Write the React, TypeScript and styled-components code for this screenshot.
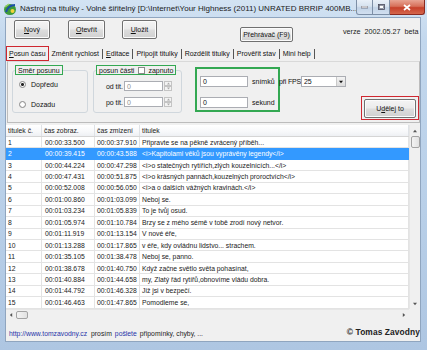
import React from 'react';
import styled, { createGlobalStyle } from 'styled-components';

const Global = createGlobalStyle`
  html, body { margin: 0; padding: 0; width: 427px; height: 350px; overflow: hidden; background: #fff; }
  * { box-sizing: border-box; }
  body { font-family: "Liberation Sans", Arial, sans-serif; color: #000; }
`;

const Window = styled.div`
  width: 427px;
  height: 350px;
  display: flex;
  flex-direction: column;
  background: linear-gradient(180deg, #d3e3f3 0%, #c2d7ed 12%, #b8cfe8 60%, #aec6e2 100%);
  padding-bottom: 8px;
`;

const TitleBar = styled.div`
  height: 17px;
  flex-shrink: 0;
  display: flex;
  align-items: flex-start;
  padding-left: 3px;
`;

const AppIcon = styled.svg`
  width: 14px;
  height: 14px;
  margin-top: 2px;
  flex-shrink: 0;
`;

const TitleText = styled.div`
  flex: 1;
  margin-left: 3px;
  margin-top: 4px;
  font-size: 8px;
  color: #1b1b1b;
  white-space: nowrap;
  overflow: hidden;
`;

const CaptionButtons = styled.div`
  display: flex;
  margin-right: 2px;
  flex-shrink: 0;
`;

const CaptionBtn = styled.div<{ $w: number; $close?: boolean; $first?: boolean; $last?: boolean }>`
  width: ${p => p.$w}px;
  height: 15px;
  display: flex;
  align-items: center;
  justify-content: center;
  border: 1px solid ${p => (p.$close ? '#8a2a20' : '#7d8fa6')};
  border-top: none;
  border-left-width: ${p => (p.$first ? 1 : 0)}px;
  border-radius: ${p => (p.$first ? '0 0 0 3px' : p.$last ? '0 0 3px 0' : '0')};
  background: ${p =>
    p.$close
      ? 'linear-gradient(180deg, #e8a493 0%, #d7705a 45%, #c7402a 55%, #d4664c 100%)'
      : 'linear-gradient(180deg, #e9f0f8 0%, #d6e2ef 45%, #c2d3e6 55%, #d1dff0 100%)'};
`;

const Client = styled.div`
  flex: 1;
  margin: 0 6px 0 5px;
  background: #f0f0f0;
  border: 1px solid #8fa5bf;
  display: flex;
  flex-direction: column;
  min-height: 0;
`;

const Toolbar = styled.div`
  height: 28px;
  flex-shrink: 0;
  display: flex;
  align-items: flex-start;
  padding: 1px 0 0 8px;
`;

const Button = styled.div<{ $w: number; $h?: number; $ml?: number; $mt?: number }>`
  width: ${p => p.$w}px;
  height: ${p => p.$h ?? 19}px;
  margin-left: ${p => p.$ml ?? 0}px;
  margin-top: ${p => p.$mt ?? 0}px;
  display: flex;
  align-items: center;
  justify-content: center;
  font-size: 7px;
  color: #111;
  border: 1px solid #707070;
  border-radius: 2px;
  background: linear-gradient(180deg, #f4f4f4 0%, #ebebeb 48%, #dddddd 52%, #d0d0d0 100%);
  box-shadow: inset 0 0 0 1px #fbfbfb;
  white-space: nowrap;
`;

const Version = styled.div`
  margin-left: 50px;
  margin-top: 8px;
  font-size: 7.2px;
  color: #222;
  white-space: nowrap;
  word-spacing: 2px;
`;

const TabRow = styled.div`
  height: 15px;
  flex-shrink: 0;
  display: flex;
  align-items: stretch;
  font-size: 7px;
  color: #111;
`;

const Tab = styled.div<{ $active?: boolean }>`
  display: flex;
  align-items: center;
  padding: 0 ${p => (p.$active ? 2 : 3)}px;
  border: ${p => (p.$active ? '1.5px solid #cf2730' : 'none')};
  white-space: nowrap;
`;

const TabSep = styled.div`
  width: 1px;
  margin: 3px 0 2px;
  background: #555;
`;

const Panel = styled.div`
  height: 62px;
  flex-shrink: 0;
  margin-left: 1px;
  border: 1px solid #bcbcbc;
  border-top-color: #d9d9d9;
  display: flex;
  align-items: flex-start;
  padding: 3px 0 0 4px;
  font-size: 7px;
  color: #111;
`;

const Group = styled.fieldset<{ $w: number; $ml?: number }>`
  width: ${p => p.$w}px;
  margin: 0 0 0 ${p => p.$ml ?? 0}px;
  padding: 0 0 0 1px;
  border: 1px solid #d0d7dd;
  border-radius: 3px;
  min-inline-size: 0;
`;

const GroupCaption = styled.legend`
  height: 10px;
  padding: 0 2px;
  margin-left: 1px;
  display: flex;
  align-items: center;
  gap: 3px;
  border: 1.5px solid #33a852;
  font-size: 7px;
  line-height: 1;
  white-space: nowrap;
`;

const GroupBody = styled.div<{ $h: number }>`
  height: ${p => p.$h}px;
  display: flex;
  flex-direction: column;
`;

const RadioRow = styled.div<{ $mt: number }>`
  display: flex;
  align-items: center;
  height: 10px;
  margin-top: ${p => p.$mt}px;
  padding-left: 5px;
  gap: 5px;
`;

const RadioDot = styled.div<{ $on?: boolean }>`
  width: 7px;
  height: 7px;
  border-radius: 50%;
  border: 1px solid #8a8a8a;
  background: radial-gradient(circle, ${p => (p.$on ? '#222 0, #222 1.3px,' : '')} #ffffff 1.6px, #e4e4e4 100%);
`;

const CheckBox = styled.div`
  width: 7px;
  height: 7px;
  border: 1px solid #8a8a8a;
  background: #fff;
  margin-left: 1px;
`;

const FieldRow = styled.div<{ $mt: number }>`
  display: flex;
  align-items: center;
  height: 10px;
  margin-top: ${p => p.$mt}px;
`;

const FieldLabel = styled.div`
  width: 29px;
  text-align: right;
  padding-right: 1px;
  white-space: nowrap;
`;

const TextBox = styled.div<{ $w: number; $h?: number; $disabled?: boolean }>`
  width: ${p => p.$w}px;
  height: ${p => p.$h ?? 10}px;
  border: 1px solid #abadb3;
  background: #fff;
  color: ${p => (p.$disabled ? '#8d8d8d' : '#111')};
  font-size: 7px;
  display: flex;
  align-items: center;
  padding-left: 2px;
`;

const Spin = styled.div`
  width: 8px;
  height: 10px;
  margin-left: 1px;
  display: flex;
  flex-direction: column;
`;

const SpinHalf = styled.div`
  flex: 1;
  border: 1px solid #c4c4c4;
  background: #f3f3f3;
  display: flex;
  align-items: center;
  justify-content: center;
`;

const FrameBox = styled.div`
  width: 85px;
  height: 45px;
  margin: 2px 0 0 13px;
  border: 2px solid #33a852;
  padding: 7px 0 0 3px;
  display: flex;
  flex-direction: column;
  gap: 10px;
`;

const FrameRow = styled.div`
  display: flex;
  align-items: center;
  gap: 4px;
  white-space: nowrap;
`;

const FpsGroup = styled.div`
  display: flex;
  align-items: center;
  margin: 11px 0 0 -1px;
  white-space: nowrap;
  letter-spacing: -0.2px;
`;

const Select = styled.div`
  width: 45px;
  height: 11px;
  border: 1px solid #abadb3;
  background: #fff;
  display: flex;
  align-items: stretch;
  font-size: 7px;
  letter-spacing: 0;
`;

const SelectValue = styled.div`
  flex: 1;
  display: flex;
  align-items: center;
  padding-left: 2px;
`;

const SelectArrow = styled.div`
  width: 9px;
  border-left: 1px solid #c9c9c9;
  background: linear-gradient(180deg, #f4f4f4, #dcdcdc);
  display: flex;
  align-items: center;
  justify-content: center;
`;

const RedFrame = styled.div`
  margin: 31px 0 0 auto;
  width: 58px;
  height: 24px;
  border: 1.5px solid #cf2730;
  display: flex;
  align-items: center;
  justify-content: center;
`;

const ListView = styled.div`
  flex: 1;
  min-height: 0;
  margin-top: 2px;
  display: grid;
  grid-template-columns: 1fr 11px;
  grid-template-rows: 1fr 10px;
  background: #fff;
  font-size: 6.8px;
  color: #1a1a1a;
`;

const ListMain = styled.div`
  display: flex;
  flex-direction: column;
  overflow: hidden;
`;

const COLS = '36px 53px 45px 1fr';

const HeaderRow = styled.div`
  display: grid;
  grid-template-columns: ${COLS};
  height: 12px;
  flex-shrink: 0;
  background: linear-gradient(180deg, #ffffff 0%, #f7f8fa 60%, #eef0f3 100%);
  border-bottom: 1px solid #d5d5d5;
`;

const HeaderCell = styled.div`
  display: flex;
  align-items: center;
  padding-left: 2px;
  border-right: 1px solid #dfe2e6;
  white-space: nowrap;
  overflow: hidden;
`;

const Row = styled.div<{ $sel?: boolean }>`
  display: grid;
  grid-template-columns: ${COLS};
  height: 11.45px;
  flex-shrink: 0;
  background: ${p => (p.$sel ? '#3399ff' : '#fff')};
  color: ${p => (p.$sel ? '#fff' : '#1a1a1a')};
`;

const Cell = styled.div<{ $sel?: boolean; $pl?: number }>`
  display: flex;
  align-items: center;
  padding-left: ${p => p.$pl ?? 2}px;
  border-right: 1px solid ${p => (p.$sel ? '#3399ff' : '#e3e3e3')};
  border-bottom: 1px solid ${p => (p.$sel ? '#3399ff' : '#e3e3e3')};
  white-space: nowrap;
  overflow: hidden;
`;

const VScroll = styled.div`
  background: #f0f0f0;
  border-left: 1px solid #e6e6e6;
  display: flex;
  flex-direction: column;
  align-items: center;
`;

const HScroll = styled.div`
  background: #f0f0f0;
  border-top: 1px solid #e6e6e6;
  display: flex;
  align-items: center;
`;

const Thumb = styled.div<{ $w: number; $h: number }>`
  width: ${p => p.$w}px;
  height: ${p => p.$h}px;
  border: 1px solid #a3a3a3;
  border-radius: 2px;
  background: linear-gradient(90deg, #f3f3f3, #e2e2e2);
`;

const ArrowBox = styled.div<{ $size: number }>`
  width: ${p => p.$size}px;
  height: ${p => p.$size}px;
  display: flex;
  align-items: center;
  justify-content: center;
  flex-shrink: 0;
`;

const Spacer = styled.div`
  flex: 1;
`;

const Corner = styled.div`
  background: #f0f0f0;
`;

const StatusBar = styled.div`
  height: 22px;
  flex-shrink: 0;
  display: flex;
  align-items: flex-end;
  padding: 0 0 4px 3px;
  font-size: 6.8px;
  white-space: nowrap;
  overflow: hidden;
`;

const Link = styled.span<{ $ml?: number }>`
  color: #1f33a8;
  margin-left: ${p => p.$ml ?? 0}px;
`;

const Plain = styled.span<{ $ml?: number }>`
  color: #222;
  margin-left: ${p => p.$ml ?? 4}px;
`;

const Copyright = styled.div`
  margin-left: auto;
  margin-right: 0;
  font-size: 8.4px;
  font-weight: bold;
  color: #222;
  letter-spacing: 0.1px;
`;

type Sub = [string, string, string, string];

const rows: Sub[] = [
  ['1', '00:00:33.500', '00:00:37.910', 'Připravte se na pěkně zvrácený příběh...'],
  ['2', '00:00:39.415', '00:00:43.588', '<i>Kapitolami věků jsou vyprávěny legendy</i>'],
  ['3', '00:00:44.224', '00:00:47.298', '<i>o statečných rytířích,zlých kouzelnících...</i>'],
  ['4', '00:00:47.431', '00:00:51.875', '<i>o krásných pannách,kouzelných proroctvích</i>'],
  ['5', '00:00:52.008', '00:00:56.050', '<i>a o dalších vážných kravinách.</i>'],
  ['6', '00:01:00.860', '00:01:03.099', 'Neboj se.'],
  ['7', '00:01:03.234', '00:01:05.839', 'To je tvůj osud.'],
  ['8', '00:01:05.974', '00:01:10.784', 'Brzy se z mého sémě v tobě zrodí nový netvor.'],
  ['9', '00:01:11.919', '00:01:13.154', 'V nové éře,'],
  ['10', '00:01:13.288', '00:01:17.865', 'v éře, kdy ovládnu lidstvo... strachem.'],
  ['11', '00:01:35.105', '00:01:38.478', 'Neboj se, panno.'],
  ['12', '00:01:38.678', '00:01:40.750', 'Když začne světlo světa pohasínat,'],
  ['13', '00:01:40.884', '00:01:44.658', 'my, Zlatý řád rytířů,obnovíme vládu dobra.'],
  ['14', '00:01:44.792', '00:01:46.328', 'Již jsi v bezpečí.'],
  ['15', '00:01:46.463', '00:01:47.865', 'Pomodleme se,'],
];

const Tri = ({ dir, size = 5, color = '#555' }: { dir: 'up' | 'down' | 'left' | 'right'; size?: number; color?: string }) => {
  const pts = {
    up: '0,4 2.5,1 5,4',
    down: '0,1 2.5,4 5,1',
    left: '4,0 1,2.5 4,5',
    right: '1,0 4,2.5 1,5',
  }[dir];
  return (
    <svg width={size} height={size} viewBox="0 0 5 5">
      <polygon points={pts} fill={color} />
    </svg>
  );
};

export default function App() {
  return (
    <>
      <Global />
      <Window>
        <TitleBar>
          <AppIcon viewBox="0 0 14 14">
            <ellipse cx="7" cy="7.5" rx="6" ry="5.5" fill="#3f9a3a" />
            <path d="M3 10 C5 4, 9 3, 12 3" stroke="#1d4fa8" strokeWidth="2" fill="none" />
            <circle cx="9.5" cy="9" r="2" fill="#f2d23a" />
            <path d="M2 5 L6 2" stroke="#9ad36a" strokeWidth="1.2" />
          </AppIcon>
          <TitleText>Nástroj na titulky - Volně šiřitelný [D:\Internet\Your Highness (2011) UNRATED BRRIP 400MB...</TitleText>
          <CaptionButtons>
            <CaptionBtn $w={17} $first>
              <svg width="7" height="3" viewBox="0 0 7 3">
                <rect x="0" y="0" width="7" height="2" fill="#fff" stroke="#445" strokeWidth="0.6" />
              </svg>
            </CaptionBtn>
            <CaptionBtn $w={17}>
              <svg width="7" height="6" viewBox="0 0 7 6">
                <rect x="0.5" y="0.5" width="6" height="5" fill="none" stroke="#445" strokeWidth="0.8" />
                <rect x="1.5" y="1.7" width="4" height="2.8" fill="#fff" stroke="#445" strokeWidth="0.5" />
              </svg>
            </CaptionBtn>
            <CaptionBtn $w={35} $close $last>
              <svg width="8" height="7" viewBox="0 0 8 7">
                <path d="M1 1 L7 6 M7 1 L1 6" stroke="#fff" strokeWidth="1.7" />
              </svg>
            </CaptionBtn>
          </CaptionButtons>
        </TitleBar>

        <Client>
          <Toolbar>
            <Button $w={36} $mt={1}><u>N</u>ový</Button>
            <Button $w={37} $ml={18} $mt={1}><u>O</u>tevřít</Button>
            <Button $w={35} $ml={17} $mt={1}><u>U</u>ložit</Button>
            <Button $w={53} $h={15} $ml={83} $mt={8}>Přehrávač (F9)</Button>
            <Version>verze 2002.05.27 beta</Version>
          </Toolbar>

          <TabRow>
            <Tab $active><u>P</u>osun času</Tab>
            <Tab>Změnit rychlost</Tab>
            <TabSep />
            <Tab><u>E</u>ditace</Tab>
            <TabSep />
            <Tab>Připojit titulky</Tab>
            <TabSep />
            <Tab>Rozdělit titulky</Tab>
            <TabSep />
            <Tab>Prověřit stav</Tab>
            <TabSep />
            <Tab>Mini help</Tab>
            <TabSep />
          </TabRow>

          <Panel>
            <Group $w={76}>
              <GroupCaption>Směr posunu</GroupCaption>
              <GroupBody $h={37}>
                <RadioRow $mt={4}><RadioDot $on />Dopředu</RadioRow>
                <RadioRow $mt={10}><RadioDot />Dozadu</RadioRow>
              </GroupBody>
            </Group>

            <Group $w={89} $ml={5}>
              <GroupCaption>posun části<CheckBox />zapnuto</GroupCaption>
              <GroupBody $h={37}>
                <FieldRow $mt={6}>
                  <FieldLabel>od tit.</FieldLabel>
                  <TextBox $w={39} $disabled>0</TextBox>
                  <Spin>
                    <SpinHalf><Tri dir="up" size={3} color="#aaa" /></SpinHalf>
                    <SpinHalf><Tri dir="down" size={3} color="#aaa" /></SpinHalf>
                  </Spin>
                </FieldRow>
                <FieldRow $mt={6}>
                  <FieldLabel>po tit.</FieldLabel>
                  <TextBox $w={39} $disabled>0</TextBox>
                  <Spin>
                    <SpinHalf><Tri dir="up" size={3} color="#aaa" /></SpinHalf>
                    <SpinHalf><Tri dir="down" size={3} color="#aaa" /></SpinHalf>
                  </Spin>
                </FieldRow>
              </GroupBody>
            </Group>

            <FrameBox>
              <FrameRow>
                <TextBox $w={48} $h={11}>0</TextBox>
                snímků
              </FrameRow>
              <FrameRow>
                <TextBox $w={48} $h={11}>0</TextBox>
                sekund
              </FrameRow>
            </FrameBox>

            <FpsGroup>
              při FPS
              <Select>
                <SelectValue>25</SelectValue>
                <SelectArrow><Tri dir="down" size={4} color="#111" /></SelectArrow>
              </Select>
            </FpsGroup>

            <RedFrame>
              <Button $w={52} $h={19}>U<u>d</u>ělej to</Button>
            </RedFrame>
          </Panel>

          <ListView>
            <ListMain>
              <HeaderRow>
                <HeaderCell>titulek č.</HeaderCell>
                <HeaderCell>čas zobraz.</HeaderCell>
                <HeaderCell>čas zmizení</HeaderCell>
                <HeaderCell>titulek</HeaderCell>
              </HeaderRow>
              {rows.map((r, i) => {
                const sel = i === 1;
                return (
                  <Row key={r[0]} $sel={sel}>
                    <Cell $sel={sel}>{r[0]}</Cell>
                    <Cell $sel={sel} $pl={3}>{r[1]}</Cell>
                    <Cell $sel={sel}>{r[2]}</Cell>
                    <Cell $sel={sel}>{r[3]}</Cell>
                  </Row>
                );
              })}
            </ListMain>
            <VScroll>
              <ArrowBox $size={11}><Tri dir="up" size={4} /></ArrowBox>
              <Thumb $w={9} $h={12} />
              <Spacer />
              <ArrowBox $size={11}><Tri dir="down" size={4} /></ArrowBox>
            </VScroll>
            <HScroll>
              <ArrowBox $size={10}><Tri dir="left" size={4} /></ArrowBox>
              <Thumb $w={12} $h={8} />
              <Spacer />
              <ArrowBox $size={10}><Tri dir="right" size={4} /></ArrowBox>
            </HScroll>
            <Corner />
          </ListView>

          <StatusBar>
            <Link>http://www.tomzavodny.cz</Link>
            <Plain>prosím</Plain>
            <Link $ml={3}>pošlete</Link>
            <Plain $ml={3}>připomínky, chyby, ...</Plain>
            <Copyright>© Tomas Zavodny</Copyright>
          </StatusBar>
        </Client>
      </Window>
    </>
  );
}
